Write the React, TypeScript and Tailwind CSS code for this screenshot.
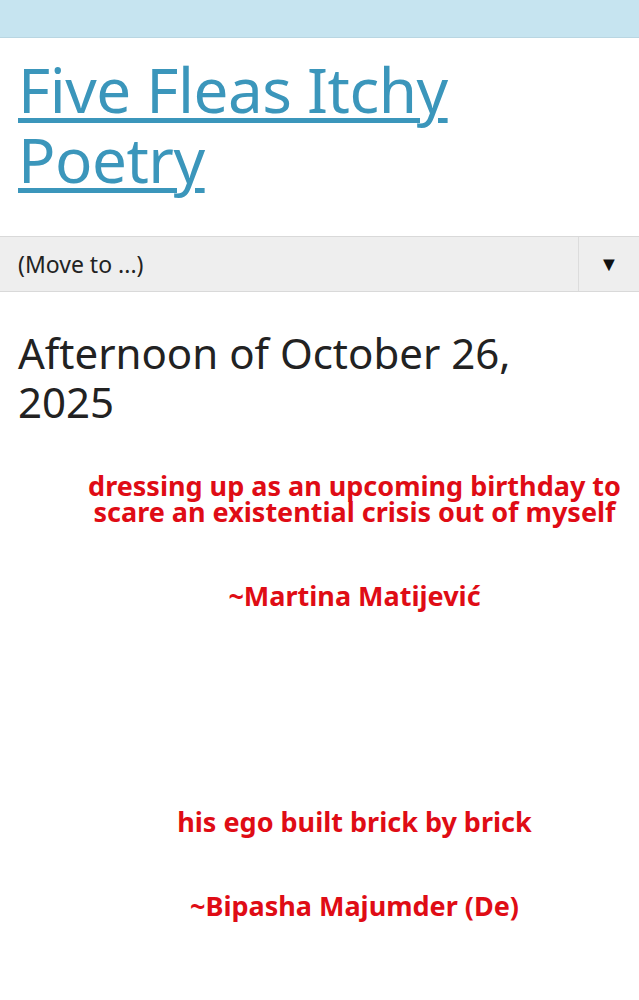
export default function App() {
  const sans = { fontFamily: '"Noto Sans", "Liberation Sans", sans-serif' }
  return (
    <div className="min-h-screen bg-white" style={sans}>
      <div className="h-[38px] bg-[#c6e4f0] border-b border-[#b9d6e2]" />

      <header className="h-[198px] px-[18px] pt-[16px]">
        <a
          href="#"
          className="text-[62px] leading-[70px] text-[#3b96bb] underline decoration-[5px] underline-offset-[5px] tracking-[-0.5px]"
        >
          Five Fleas Itchy Poetry
        </a>
      </header>

      <div className="flex h-[56px] items-stretch bg-[#eeeeee] border-y border-[#d9d9d9]">
        <div className="flex flex-1 items-center pl-[18px] text-[23px] text-[#222]">(Move to ...)</div>
        <div className="flex w-[61px] items-center justify-center border-l border-[#dcdcdc] text-[20px] text-[#111]">
          ▼
        </div>
      </div>

      <main className="px-[18px] pt-[36px]">
        <h1 className="pr-[40px] text-[42px] leading-[49px] font-normal text-[#222]">
          Afternoon of October 26, 2025
        </h1>

        <div className="ml-[70px] mt-[47px] text-center text-[27px] leading-[26px] font-bold text-[#df0c15]">
          <p>dressing up as an upcoming birthday to scare an existential crisis out of myself</p>
          <p className="mt-[58px]">~Martina Matijević</p>
          <p className="mt-[200px]">his ego built brick by brick</p>
          <p className="mt-[58px]">~Bipasha Majumder (De)</p>
        </div>
      </main>
    </div>
  )
}
